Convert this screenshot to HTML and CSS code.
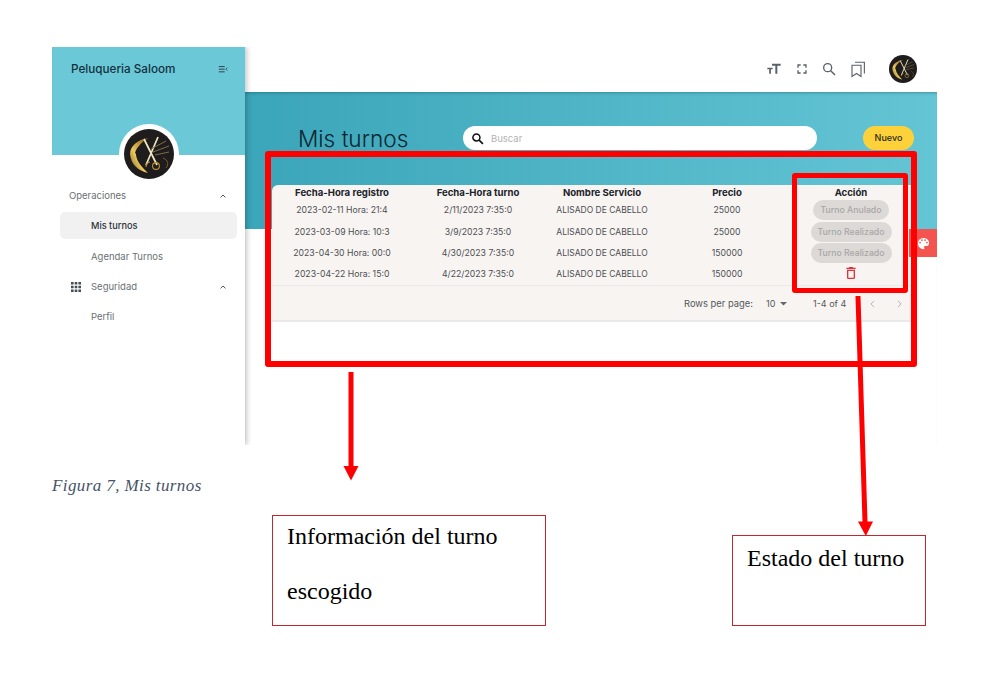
FILE: index.html
```html
<!DOCTYPE html>
<html lang="es">
<head>
<meta charset="utf-8">
<title>Mis turnos</title>
<link rel="stylesheet" href="styles.css">
</head>
<body>
<svg class="defs" width="0" height="0" aria-hidden="true">
  <defs>
    <linearGradient id="gold" x1="0" y1="1" x2="1" y2="0">
      <stop offset="0" stop-color="#7d5a1c"/>
      <stop offset=".4" stop-color="#e8c75f"/>
      <stop offset=".7" stop-color="#b78d35"/>
      <stop offset="1" stop-color="#6b5423"/>
    </linearGradient>
    <symbol id="logo" viewBox="0 0 50 50">
      <circle cx="25" cy="25" r="25" fill="#1e1c1c"/>
      <path d="M6 25C6 17 14 10 25 9C17 13 12 19 12 26C13 33 18 38 24 44C14 42 7 35 6 25Z" fill="url(#gold)"/>
      <path d="M11 24C13 17 19 13 25 12C20 16 16 21 17 28C15 27 13 26 11 24Z" fill="#1e1c1c"/>
      <path d="M20 10L33 36M34 8L22 36" stroke="#f0e6bd" stroke-width="1.7" fill="none"/>
      <path d="M27 20L42 12M29 23L45 17M31 26L45 23" stroke="#7d6e48" stroke-width="1" fill="none"/>
      <circle cx="32" cy="37" r="3.4" stroke="#bd9538" stroke-width="1.1" fill="none"/>
      <path d="M22 38C22 35 24 33 26 33" stroke="#bd9538" stroke-width="1.1" fill="none"/>
      <path d="M39 29C44 31 45 35 42 39" stroke="#7a5f22" stroke-width="1" fill="none"/>
    </symbol>
  </defs>
</svg>

<div class="page">
  <div class="app">
    <aside class="sidebar">
      <div class="side-head">
        <div class="brand-row">
          <span class="brand">Peluqueria Saloom</span>
          <svg class="menu-icon" viewBox="0 0 12 10"><path d="M1 1.5H8M1 4.6H8M1 7.8H8" stroke="#2b3a44" stroke-width="1.1" fill="none"/><path d="M11.2 2.8L9.4 4.6L11.2 6.4" stroke="#2b3a44" stroke-width=".9" fill="none"/></svg>
        </div>
        <div class="side-avatar"><svg class="logo-lg"><use href="#logo"/></svg></div>
      </div>
      <nav class="nav">
        <div class="nav-item group">
          <span>Operaciones</span>
          <svg class="chev" viewBox="0 0 10 6"><path d="M2.5 4.4L5 2L7.5 4.4" stroke="#555" stroke-width="1" fill="none"/></svg>
        </div>
        <div class="nav-item sub active"><span>Mis turnos</span></div>
        <div class="nav-item sub"><span>Agendar Turnos</span></div>
        <div class="nav-item group">
          <svg class="apps" viewBox="0 0 10 10"><path d="M0 0h2.6v2.6H0zM3.7 0h2.6v2.6H3.7zM7.4 0H10v2.6H7.4zM0 3.7h2.6v2.6H0zM3.7 3.7h2.6v2.6H3.7zM7.4 3.7H10v2.6H7.4zM0 7.4h2.6V10H0zM3.7 7.4h2.6V10H3.7zM7.4 7.4H10V10H7.4z" fill="#454c53"/></svg>
          <span>Seguridad</span>
          <svg class="chev" viewBox="0 0 10 6"><path d="M2.5 4.4L5 2L7.5 4.4" stroke="#555" stroke-width="1" fill="none"/></svg>
        </div>
        <div class="nav-item sub"><span>Perfil</span></div>
      </nav>
    </aside>

    <main class="main">
      <header class="topbar">
        <svg class="tool" viewBox="0 0 24 24"><path d="M9 4V7H14V19H17V7H22V4H9M2 10V12.5H4.8V19H7.4V12.5H10V10H2Z" fill="#5a6168"/></svg>
        <svg class="tool" viewBox="0 0 24 24"><path d="M5 5H10V7H7V10H5V5M14 5H19V10H17V7H14V5M17 14H19V19H14V17H17V14M10 17V19H5V14H7V17H10Z" fill="#5a6168"/></svg>
        <svg class="tool" viewBox="0 0 24 24"><circle cx="10" cy="10" r="6" stroke="#5a6168" stroke-width="2" fill="none"/><path d="M14.5 14.5L21 21" stroke="#5a6168" stroke-width="2.2" fill="none"/></svg>
        <svg class="tool tool-wide" viewBox="0 0 24 24"><path d="M4 7H16V22L10 18L4 22Z" stroke="#5a6168" stroke-width="1.5" fill="none"/><path d="M8 3H20.5V18" stroke="#5a6168" stroke-width="1.5" fill="none"/></svg>
        <svg class="logo-sm"><use href="#logo"/></svg>
      </header>

      <section class="content">
        <div class="title-row">
          <h1 class="title">Mis turnos</h1>
          <div class="search">
            <svg class="search-icon" viewBox="0 0 24 24"><circle cx="10" cy="10" r="6.5" stroke="#111" stroke-width="2.8" fill="none"/><path d="M15 15L22 22" stroke="#111" stroke-width="3" fill="none"/></svg>
            <span class="search-text">Buscar</span>
          </div>
          <button class="new-btn" type="button">Nuevo</button>
        </div>

        <div class="card">
          <div class="row head">
            <span>Fecha-Hora registro</span><span>Fecha-Hora turno</span><span>Nombre Servicio</span><span>Precio</span><span>Acción</span>
          </div>
          <div class="row">
            <span>2023-02-11 Hora: 21:4</span><span>2/11/2023 7:35:0</span><span class="service">ALISADO DE CABELLO</span><span>25000</span><span><b class="pill narrow">Turno Anulado</b></span>
          </div>
          <div class="row">
            <span>2023-03-09 Hora: 10:3</span><span>3/9/2023 7:35:0</span><span class="service">ALISADO DE CABELLO</span><span>25000</span><span><b class="pill">Turno Realizado</b></span>
          </div>
          <div class="row">
            <span>2023-04-30 Hora: 00:0</span><span>4/30/2023 7:35:0</span><span class="service">ALISADO DE CABELLO</span><span>150000</span><span><b class="pill">Turno Realizado</b></span>
          </div>
          <div class="row">
            <span>2023-04-22 Hora: 15:0</span><span>4/22/2023 7:35:0</span><span class="service">ALISADO DE CABELLO</span><span>150000</span>
            <span class="trash-cell"><svg class="trash" viewBox="0 0 24 24"><path d="M6 19A2 2 0 0 0 8 21H16A2 2 0 0 0 18 19V7H6V19M8 9H16V19H8V9M15.5 4L14.5 3H9.5L8.5 4H5V6H19V4H15.5Z" fill="#e0323a"/></svg></span>
          </div>
          <div class="pager">
            <span class="pager-label">Rows per page:</span>
            <span class="pager-size">10</span>
            <svg class="caret" viewBox="0 0 8 4"><path d="M0 0H8L4 4Z" fill="#666"/></svg>
            <span class="pager-count">1-4 of 4</span>
            <svg class="page-arrow first" viewBox="0 0 6 10"><path d="M5 1L1 5L5 9" stroke="#aaa" stroke-width="1.1" fill="none"/></svg>
            <svg class="page-arrow" viewBox="0 0 6 10"><path d="M1 1L5 5L1 9" stroke="#aaa" stroke-width="1.1" fill="none"/></svg>
          </div>
        </div>

        <div class="palette"><svg viewBox="0 0 24 24"><path d="M17.5 12A1.5 1.5 0 0 1 16 10.5A1.5 1.5 0 0 1 17.5 9A1.5 1.5 0 0 1 19 10.5A1.5 1.5 0 0 1 17.5 12M14.5 8A1.5 1.5 0 0 1 13 6.5A1.5 1.5 0 0 1 14.5 5A1.5 1.5 0 0 1 16 6.5A1.5 1.5 0 0 1 14.5 8M9.5 8A1.5 1.5 0 0 1 8 6.5A1.5 1.5 0 0 1 9.5 5A1.5 1.5 0 0 1 11 6.5A1.5 1.5 0 0 1 9.5 8M6.5 12A1.5 1.5 0 0 1 5 10.5A1.5 1.5 0 0 1 6.5 9A1.5 1.5 0 0 1 8 10.5A1.5 1.5 0 0 1 6.5 12M12 3A9 9 0 0 0 3 12A9 9 0 0 0 12 21A1.5 1.5 0 0 0 13.5 19.5C13.5 19.11 13.35 18.76 13.11 18.5C12.88 18.23 12.73 17.88 12.73 17.5A1.5 1.5 0 0 1 14.23 16H16A5 5 0 0 0 21 11C21 6.58 16.97 3 12 3Z" fill="#fff"/></svg></div>
      </section>
    </main>
  </div>

  <p class="caption">Figura 7, Mis turnos</p>

  <div class="notes">
    <div class="note note-info"><p>Información del turno</p><p>escogido</p></div>
    <div class="note note-state"><p>Estado del turno</p></div>
  </div>

  <div class="mark mark-large"></div>
  <div class="mark mark-small"></div>
  <svg class="arrows" viewBox="0 0 988 679">
    <path d="M351 372V467" stroke="#fe0000" stroke-width="5" fill="none"/>
    <path d="M343.5 466H358.5L351 480.5Z" fill="#fe0000"/>
    <path d="M858 296L865 522" stroke="#fe0000" stroke-width="5" fill="none"/>
    <path d="M858 521.5H873L865.8 536Z" fill="#fe0000"/>
  </svg>
</div>
</body>
</html>
```

FILE: styles.css
```css
* { box-sizing: border-box; }

html, body {
  margin: 0;
  padding: 0;
  background: #fff;
}

.defs { position: absolute; }

.page {
  position: relative;
  width: 988px;
  height: 679px;
  padding: 47px 51px 0 52px;
  overflow: hidden;
  font-family: "Inter", "Open Sans", sans-serif;
}

.app {
  display: flex;
  width: 885px;
  height: 398px;
  overflow: hidden;
}

/* Sidebar */
.sidebar {
  position: relative;
  z-index: 2;
  flex: 0 0 193px;
  background: #fff;
  box-shadow: 2px 0 5px rgba(0, 0, 0, .22);
}

.side-head {
  height: 108px;
  background: #6bc8d6;
  padding: 0 16px 0 19px;
}

.brand-row {
  display: flex;
  align-items: center;
  justify-content: space-between;
  height: 44px;
}

.brand {
  font-size: 11.7px;
  font-weight: 500;
  color: #12303f;
}

.menu-icon { width: 10px; height: 9px; margin-right: 1px; }

.side-avatar {
  position: relative;
  width: 60px;
  height: 60px;
  margin: 33px 0 0 48px;
  padding: 5px;
  border-radius: 50%;
  background: #fff;
}

.logo-lg { display: block; width: 50px; height: 50px; }

.nav { margin-top: 27px; padding: 0 8px; }

.nav-item {
  display: flex;
  align-items: center;
  height: 27px;
  margin-bottom: 3.35px;
  padding-left: 31px;
  border-radius: 5px;
  font-size: 9.5px;
  color: #6b6f74;
}

.nav-item.group { padding-left: 9px; padding-right: 9px; }

.nav-item.group .chev { margin-left: auto; width: 10px; height: 6px; }

.nav-item.active { background: #f1f1f1; color: #2d3339; font-weight: 500; font-size: 9.2px; }

.apps { width: 10px; height: 10px; margin: 0 10px 0 2px; }

/* Main */
.main {
  flex: 1;
  display: flex;
  flex-direction: column;
  min-width: 0;
}

.topbar {
  display: flex;
  align-items: center;
  height: 45px;
  padding: 0 20px 2px 0;
  justify-content: flex-end;
  background: #fff;
}

.tool { width: 16px; height: 16px; margin-right: 11.5px; }

.tool-wide { width: 18px; height: 18px; margin-right: 9.5px; }

.logo-sm { width: 28px; height: 28px; margin-left: 13px; }

.content {
  position: relative;
  flex: 1;
  padding: 34px 23px 0 27px;
  background: linear-gradient(90deg, #3ba5b9 0%, #64c5d4 100%) top left / 100% 137px no-repeat;
  box-shadow: inset 0 3px 3px -2px rgba(0, 60, 70, .35);
}

.title-row {
  display: flex;
  align-items: center;
  height: 24px;
}

.title {
  flex: 0 0 auto;
  width: 165px;
  margin: 0 0 0 26px;
  font-size: 22.6px;
  font-weight: 300;
  color: #0a2530;
  white-space: nowrap;
}

.search {
  display: flex;
  align-items: center;
  flex: 0 0 354px;
  height: 24px;
  padding-left: 8px;
  border-radius: 12px;
  background: #fff;
}

.search-icon { width: 13px; height: 13px; margin-right: 7px; }

.search-text { font-size: 9.5px; color: #b3b3b3; }

.new-btn {
  flex: 0 0 51px;
  height: 24px;
  margin-left: 46px;
  padding: 0 0 1px;
  border: 0;
  border-radius: 12px;
  background: #fdd13a;
  font: 500 9px "Inter", sans-serif;
  color: #2a2a1a;
}

/* Table card */
.card {
  margin-top: 35px;
  height: 137px;
  padding-top: 0;
  border-radius: 6px 0 0 0;
  border-bottom: 2px solid #ebe9e7;
  background: #f8f4f2;
}

.row {
  display: grid;
  grid-template-columns: 140px 132px 116px 134px 114px;
  align-items: center;
  height: 21.35px;
  text-align: center;
  font-size: 8.7px;
  color: #4d4f52;
  white-space: nowrap;
}

.row > span { display: flex; justify-content: center; align-items: center; }

.row.head {
  height: 14.5px;
  font-size: 9.6px;
  font-weight: 700;
  color: #20232a;
}

.service { font-size: 8.5px; }

.pill {
  display: block;
  width: 81px;
  height: 20px;
  line-height: 20px;
  border-radius: 10px;
  background: #dcd9d7;
  color: #a9a7a6;
  font-size: 8.7px;
  font-weight: 500;
}

.pill.narrow { width: 76px; }

.trash { display: block; width: 16px; height: 16px; margin-top: -3px; }

.pager {
  display: flex;
  align-items: center;
  height: 36px;
  margin-top: .5px;
  border-top: 1px solid #ece8e6;
  padding-left: 412px;
  font-size: 9.4px;
  color: #55585c;
  white-space: nowrap;
}

.pager-label { width: 82px; }

.pager-size { width: 14px; font-size: 9px; }

.caret { width: 7px; height: 3.5px; }

.pager-count { margin-left: 26px; width: 57px; font-size: 9px; }

.page-arrow { width: 5px; height: 8px; }

.page-arrow.first { margin-right: 22px; }

.palette {
  position: absolute;
  top: 137px;
  right: 0;
  display: flex;
  align-items: center;
  justify-content: center;
  width: 28px;
  height: 28px;
  background: #f4544f;
}

.palette svg { width: 15px; height: 15px; }

/* Figure notes */
.caption {
  margin: 30px 0 0;
  font: italic 17px/22px "Liberation Serif", serif;
  letter-spacing: .4px;
  color: #44546a;
}

.notes {
  display: flex;
  align-items: flex-end;
  height: 110px;
  margin-top: 19px;
  padding-left: 220px;
}

.note {
  padding: 0 14px;
  border: 1px solid #c0282d;
  font: 24px/55px "Liberation Serif", serif;
  color: #000;
  background: #fff;
}

.note p { margin: 0; }

.note-info { width: 274px; height: 111px; }

.note-info p:first-child { margin-top: -7px; }

.note-state { width: 194px; height: 91px; margin-left: 186px; }

.note-state p:first-child { margin-top: -5px; }

/* Hand-drawn annotations laid over the screenshot */
.mark {
  position: absolute;
  border: 6px solid #fe0000;
  border-radius: 3px;
}

.mark-large { left: 265px; top: 151px; width: 652px; height: 216px; }

.mark-small { left: 792px; top: 173px; width: 116px; height: 120px; border-width: 5px; }

.arrows {
  position: absolute;
  left: 0;
  top: 0;
  width: 988px;
  height: 679px;
}
```
